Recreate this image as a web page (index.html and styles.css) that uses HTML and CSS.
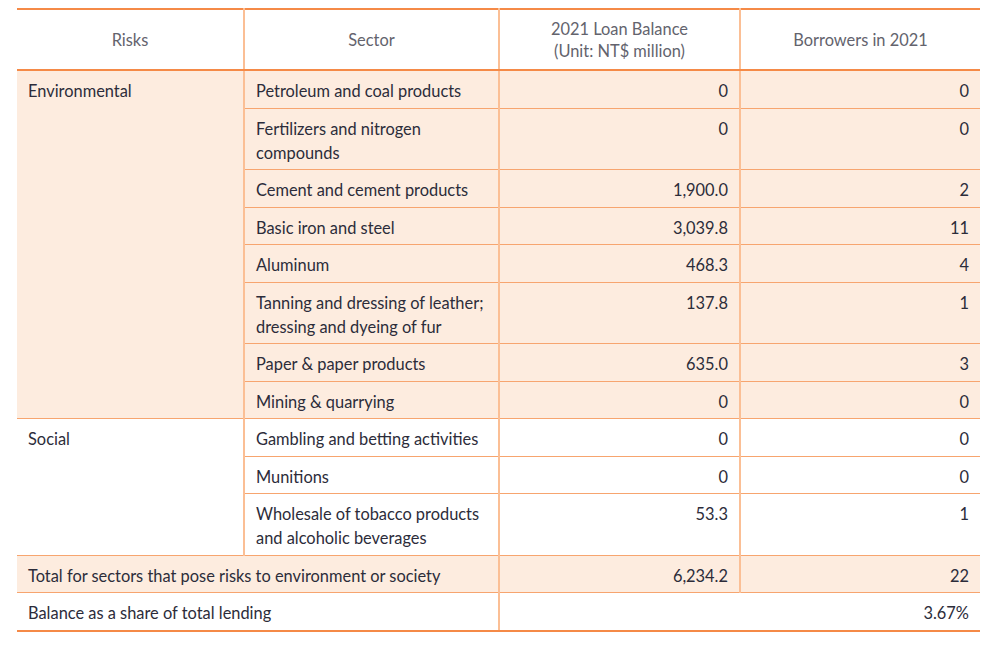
FILE: index.html
```html
<!DOCTYPE html>
<html>
<head>
<meta charset="utf-8">
<link rel="stylesheet" href="styles.css">
</head>
<body>
<table class="risk-table">
  <colgroup>
    <col class="c1"><col class="c2"><col class="c3"><col class="c4">
  </colgroup>
  <thead>
    <tr>
      <th>Risks</th>
      <th>Sector</th>
      <th>2021 Loan Balance<br>(Unit: NT$ million)</th>
      <th>Borrowers in 2021</th>
    </tr>
  </thead>
  <tbody>
    <tr class="env">
      <td rowspan="8" class="group">Environmental</td>
      <td>Petroleum and coal products</td><td class="num">0</td><td class="num">0</td>
    </tr>
    <tr class="env"><td>Fertilizers and nitrogen<br>compounds</td><td class="num">0</td><td class="num">0</td></tr>
    <tr class="env"><td>Cement and cement products</td><td class="num">1,900.0</td><td class="num">2</td></tr>
    <tr class="env"><td>Basic iron and steel</td><td class="num">3,039.8</td><td class="num">11</td></tr>
    <tr class="env"><td>Aluminum</td><td class="num">468.3</td><td class="num">4</td></tr>
    <tr class="env"><td>Tanning and dressing of leather;<br>dressing and dyeing of fur</td><td class="num">137.8</td><td class="num">1</td></tr>
    <tr class="env"><td>Paper &amp; paper products</td><td class="num">635.0</td><td class="num">3</td></tr>
    <tr class="env"><td>Mining &amp; quarrying</td><td class="num">0</td><td class="num">0</td></tr>
    <tr>
      <td rowspan="3" class="group">Social</td>
      <td>Gambling and betting activities</td><td class="num">0</td><td class="num">0</td>
    </tr>
    <tr><td>Munitions</td><td class="num">0</td><td class="num">0</td></tr>
    <tr><td>Wholesale of tobacco products<br>and alcoholic beverages</td><td class="num">53.3</td><td class="num">1</td></tr>
    <tr class="env total"><td colspan="2">Total for sectors that pose risks to environment or society</td><td class="num">6,234.2</td><td class="num">22</td></tr>
    <tr class="last"><td colspan="2">Balance as a share of total lending</td><td colspan="2" class="num">3.67%</td></tr>
  </tbody>
</table>
</body>
</html>
```
FILE: styles.css
```css
html, body {
  margin: 0;
  padding: 0;
  background: #ffffff;
}
body {
  padding: 8px 0 0 17px;
  font-family: "Lato", "Noto Sans", sans-serif;
  font-size: 16.4px;
  color: #2c2c3a;
}
.risk-table {
  border-collapse: collapse;
  width: 963px;
  table-layout: fixed;
  border-top: 2px solid #f58a47;
  border-bottom: 2px solid #f58a47;
}
.c1 { width: 227px; }
.c2 { width: 255px; }
.c3 { width: 241px; }
.c4 { width: 240px; }
.risk-table th {
  font-weight: normal;
  color: #63636d;
  height: 59px;
  padding: 0 10px;
  text-align: center;
  line-height: 22px;
  border-bottom: 2px solid #f58a47;
  border-left: 2px solid #fbbf95;
}
.risk-table th:first-child { border-left: none; }
.risk-table td {
  vertical-align: top;
  padding: 8px 11px 4.5px 11px;
  line-height: 24px;
  border-bottom: 1.5px solid #f7a56f;
  border-left: 2px solid #fbbf95;
  text-align: left;
}
.risk-table td.group { border-left: none; }
.risk-table tr.total td:first-child,
.risk-table tr.last td:first-child { border-left: none; }
.risk-table td.num { text-align: right; }
.env td { background: #fdecdf; }
.risk-table tr.last td { border-bottom: 2px solid #f58a47; }
```
